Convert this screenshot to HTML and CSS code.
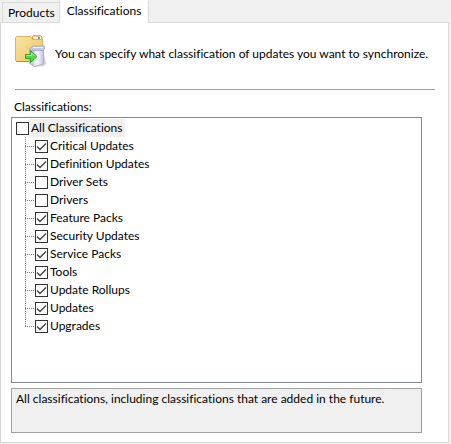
FILE: index.html
```html
<!DOCTYPE html>
<html lang="en">
<head>
<meta charset="utf-8">
<title>Products and Classifications</title>
<link rel="stylesheet" href="styles.css">
</head>
<body>
<main class="dialog">
  <div class="tabs" role="tablist">
    <button class="tab" type="button" role="tab" aria-selected="false">Products</button>
    <button class="tab tab-active" type="button" role="tab" aria-selected="true">Classifications</button>
  </div>
  <section class="panel" role="tabpanel">
    <header class="intro">
      <svg class="icon" viewBox="0 0 32 32" aria-hidden="true">
        <defs>
          <linearGradient id="folder" x1="0" y1="0" x2="1" y2="1">
            <stop offset="0" stop-color="#fbe3a0"/><stop offset="1" stop-color="#efc468"/>
          </linearGradient>
          <linearGradient id="box" x1="0" y1="0" x2="1" y2="0">
            <stop offset="0" stop-color="#b4b4d4"/><stop offset=".25" stop-color="#dcdcf0"/><stop offset=".6" stop-color="#f6f6fc"/><stop offset="1" stop-color="#c2c2da"/>
          </linearGradient>
        </defs>
        <path d="M17.500 5V1.500L18.500 .5h7l1.500 1.500V25h-3z" fill="#f2d384" stroke="#d0a65a"/>
        <path d="M19 2h7v2h-7z" fill="#fff3c8"/>
        <path d="M23 2h2v2h-2z" fill="#5f9ddf"/>
        <path d="M.5 2.500l1-1h14l2 3h10V25l-1 1.500H1.500l-1-1z" fill="url(#folder)" stroke="#dcb265"/>
        <path d="M1 26.500h15" stroke="#bd9045"/>
        <path d="M28 16l3.500 13-3 2.500H18z" fill="#777799" opacity=".3"/>
        <path d="M14.500 14h14v15l-9 2.500-5-3z" fill="url(#box)" stroke="#a6a6c6" stroke-width=".8"/>
        <path d="M18 16v14" stroke="#b0b0ca" stroke-width=".7"/>
        <path d="M14.500 13.500l3.500-2.500h11.500v3l-2 1.500h-13z" fill="#c8c8e6" stroke="#a2a2c6" stroke-width=".8"/>
        <path d="M18 12.500h10" stroke="#f0f0fc"/>
        <path d="M10.500 19.500h5v-4l6.500 6-6.500 6v-4h-5z" fill="#58d83d" stroke="#37a52f"/>
        <path d="M11.500 20.500h5v-2.500l3 3" fill="none" stroke="#a9f38e"/>
      </svg>
      <p class="intro-text">You can specify what classification of updates you want to synchronize.</p>
    </header>
    <h2 class="label" id="tree-label">Classifications:</h2>
    <div class="tree" role="group" aria-labelledby="tree-label">
      <label class="row"><input class="check" type="checkbox"><span class="name selected">All Classifications</span></label>
      <ul class="children">
        <li class="item"><label class="row"><input class="check" type="checkbox" checked><span class="name">Critical Updates</span></label></li>
        <li class="item"><label class="row"><input class="check" type="checkbox" checked><span class="name">Definition Updates</span></label></li>
        <li class="item"><label class="row"><input class="check" type="checkbox"><span class="name">Driver Sets</span></label></li>
        <li class="item"><label class="row"><input class="check" type="checkbox"><span class="name">Drivers</span></label></li>
        <li class="item"><label class="row"><input class="check" type="checkbox" checked><span class="name">Feature Packs</span></label></li>
        <li class="item"><label class="row"><input class="check" type="checkbox" checked><span class="name">Security Updates</span></label></li>
        <li class="item"><label class="row"><input class="check" type="checkbox" checked><span class="name">Service Packs</span></label></li>
        <li class="item"><label class="row"><input class="check" type="checkbox" checked><span class="name">Tools</span></label></li>
        <li class="item"><label class="row"><input class="check" type="checkbox" checked><span class="name">Update Rollups</span></label></li>
        <li class="item"><label class="row"><input class="check" type="checkbox" checked><span class="name">Updates</span></label></li>
        <li class="item"><label class="row"><input class="check" type="checkbox" checked><span class="name">Upgrades</span></label></li>
      </ul>
    </div>
    <p class="description">All classifications, including classifications that are added in the future.</p>
  </section>
</main>
</body>
</html>
```
FILE: styles.css
```css
* {
  box-sizing: border-box;
}

body {
  margin: 0;
  background: #f0f0f0;
  color: #000;
  font: 12px/18px Lato, "Open Sans", sans-serif;
  font-variant-ligatures: none;
}

p, h2, ul {
  margin: 0;
  padding: 0;
}

.dialog {
  display: flex;
  flex-direction: column;
  min-height: 100vh;
  padding: 0 2px 1px 0;
}

.tabs {
  display: flex;
  align-items: flex-end;
  height: 23px;
  padding-left: 2px;
}

.tab {
  height: 21px;
  padding: 0 4px 0 5px;
  border: 1px solid #d9d9d9;
  border-right: 0;
  background: #f0f0f0;
  color: inherit;
  font: inherit;
  font-variant-ligatures: none;
}

.tab-active {
  z-index: 1;
  height: 23px;
  padding: 0 7px 2px;
  border-right: 1px solid #d9d9d9;
  border-top-color: #fff;
  border-bottom: 0;
  background: #fff;
}

.panel {
  display: flex;
  flex: 1;
  flex-direction: column;
  margin-top: -1px;
  padding: 12px 26px 9px 10px;
  border: 1px solid #d9d9d9;
  background: #fff;
}

.intro {
  display: flex;
  gap: 8px;
  height: 55px;
  margin: 0 -13px 0 4px;
  border-bottom: 1px solid #a0a0a0;
}

.icon {
  flex: none;
  width: 32px;
  height: 32px;
}

.intro-text {
  padding-top: 10px;
  white-space: nowrap;
}

.label {
  margin: 8px 0 1px 3px;
  font: inherit;
  font-variant-ligatures: none;
}

.tree {
  flex: 1;
  padding: 1px 4px;
  border: 1px solid #828790;
}

.row {
  display: flex;
  align-items: center;
  width: max-content;
  height: 18px;
}

.check {
  appearance: none;
  width: 13px;
  height: 13px;
  margin: 0;
  border: 1px solid #333;
  background: #fff;
}

.check:checked {
  background-image: url("data:image/svg+xml,%3Csvg xmlns='http://www.w3.org/2000/svg' viewBox='0 0 11 11'%3E%3Cpath d='M1 5.500L4 8.500L10 2.500' fill='none' stroke='%23444' stroke-width='1.400'/%3E%3C/svg%3E");
}

.name {
  padding: 0 2px;
}

.selected {
  background: #f0f0f0;
}

.children {
  padding-left: 9px;
  list-style: none;
}

.item {
  display: flex;
  align-items: center;
  background: repeating-linear-gradient(to bottom, #808080 0 1px, transparent 1px 2px) left top / 1px 100% no-repeat;
}

.item:last-child {
  background-size: 1px 9px;
}

.item::before {
  width: 10px;
  height: 1px;
  background: repeating-linear-gradient(to right, #808080 0 1px, transparent 1px 2px);
  content: "";
}

.description {
  height: 45px;
  margin-top: 5px;
  padding: 1px 4px;
  border: 1px solid #a0a0a0;
  background: #f0f0f0;
}
```
